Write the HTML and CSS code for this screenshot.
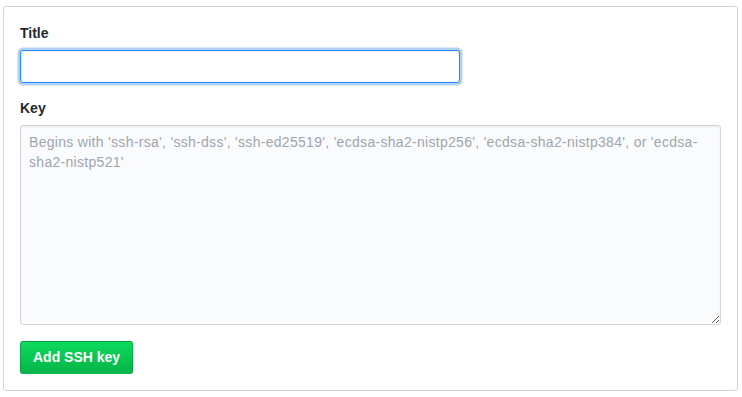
FILE: index.html
```html
<!DOCTYPE html>
<html lang="en">
<head>
    <meta charset="UTF-8">
    <title>Add SSH key</title>
    <link rel="stylesheet" href="styles.css">
</head>
<body>
    <form class="ssh-form">
        <dl class="form-group">
            <dt><label for="title">Title</label></dt>
            <dd><input type="text" id="title" class="form-control form-control--focus"></dd>
        </dl>
        <dl class="form-group form-group--key">
            <dt><label for="key">Key</label></dt>
            <dd>
                <textarea id="key" class="form-control form-control--key"
                          placeholder="Begins with 'ssh-rsa', 'ssh-dss', 'ssh-ed25519', 'ecdsa-sha2-nistp256', 'ecdsa-sha2-nistp384', or 'ecdsa-sha2-nistp521'"></textarea>
            </dd>
        </dl>
        <button type="button" class="btn-primary">Add SSH key</button>
    </form>
</body>
</html>
```

FILE: styles.css
```css
body {
    margin: 0;
    padding: 6px 4px 0 3px;
    background: #fff;
    color: #24292e;
    font-family: "Liberation Sans", Arial, sans-serif;
    font-size: 14px;
    line-height: 1.5;
}

.ssh-form {
    border: 1px solid #d1d5da;
    border-radius: 3px;
    padding: 16px;
}

.form-group {
    margin: 0 0 15px;
}

.form-group--key {
    margin-bottom: 16px;
}

.form-group dt {
    margin: 0 0 6px;
}

.form-group dd {
    margin: 0;
}

.form-group label {
    font-weight: 600;
}

.form-control {
    box-sizing: border-box;
    display: block;
    padding: 6px 8px;
    font-family: inherit;
    font-size: 14px;
    line-height: 20px;
    color: #24292e;
    background: #fff;
    border: 1px solid #d1d5da;
    border-radius: 3px;
    box-shadow: inset 0 1px 2px rgba(27, 31, 35, 0.075);
    outline: none;
}

.form-control--focus {
    width: 440px;
    height: 33px;
    border-color: #2188ff;
    box-shadow: inset 0 1px 2px rgba(27, 31, 35, 0.075), 0 0 0 2.5px rgba(3, 102, 214, 0.3);
}

.form-control--key {
    width: 100%;
    height: 200px;
    background: #fafbfc;
    letter-spacing: 0.3px;
    resize: vertical;
}

.form-control--key::placeholder {
    color: #a0a6ad;
}

.btn-primary {
    display: block;
    padding: 6px 12px;
    font-family: inherit;
    font-size: 14px;
    font-weight: 600;
    line-height: 19px;
    color: #fff;
    background: linear-gradient(-180deg, #0cd95c 0%, #06b94a 90%);
    border: 1px solid rgba(27, 31, 35, 0.2);
    border-radius: 3px;
}
```
